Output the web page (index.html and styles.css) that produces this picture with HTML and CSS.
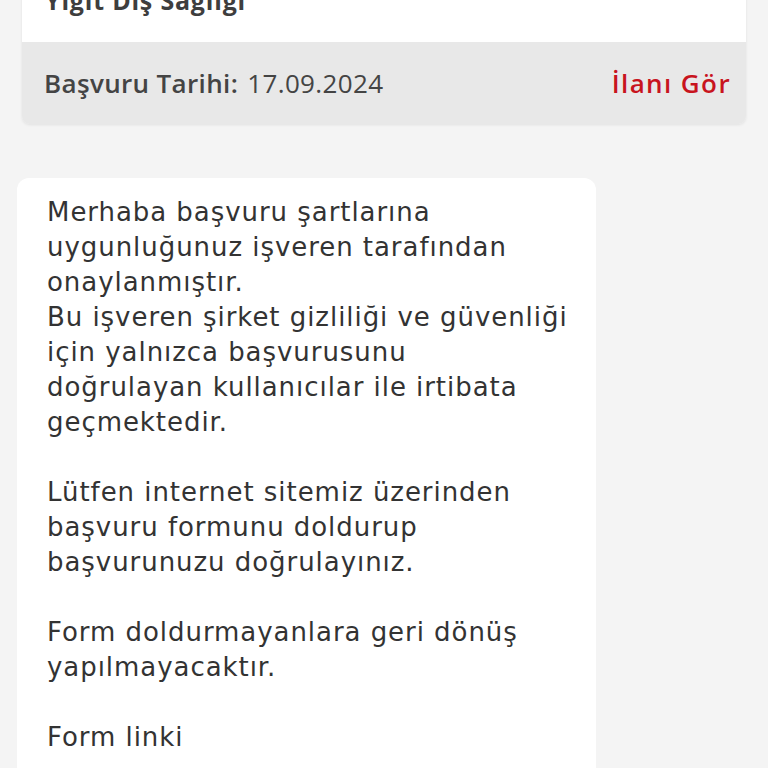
FILE: index.html
```html
<!DOCTYPE html>
<html lang="tr">
<head>
    <meta charset="utf-8">
    <title>Başvurular</title>
    <link rel="stylesheet" href="styles.css">
</head>
<body>
<div class="page">
    <div class="jobCard">
        <div class="jobCard__body">
            <h3 class="jobCard__title">Yiğit Diş Sağlığı</h3>
        </div>
        <div class="jobCard__footer">
            <div class="jobCard__date">
                <span class="jobCard__label">Başvuru Tarihi:</span>
                <span>17.09.2024</span>
            </div>
            <a class="jobCard__link">İlanı Gör</a>
        </div>
    </div>

    <div class="message">
        <p>Merhaba başvuru şartlarına uygunluğunuz işveren tarafından onaylanmıştır.<br>
        Bu işveren şirket gizliliği ve güvenliği için yalnızca başvurusunu doğrulayan kullanıcılar ile irtibata geçmektedir.</p>
        <p>Lütfen internet sitemiz üzerinden başvuru formunu doldurup başvurunuzu doğrulayınız.</p>
        <p>Form doldurmayanlara geri dönüş yapılmayacaktır.</p>
        <p>Form linki</p>
    </div>
</div>
</body>
</html>
```

FILE: styles.css
```css
body {
    margin: 0;
    padding: 0;
    background: #f4f4f4;
    font-family: 'DejaVu Sans', sans-serif;
    overflow: hidden;
}

.page {
    display: flex;
    flex-direction: column;
    align-items: flex-start;
    padding: 0 17px;
}

.jobCard {
    align-self: stretch;
    margin: -60px 5px 0 5px;
    border-radius: 0 0 8px 8px;
    overflow: hidden;
    box-shadow: 0 1px 3px rgba(0, 0, 0, 0.08);
}

.jobCard__body {
    background: #fff;
    height: 102px;
    padding: 0 23px;
    display: flex;
    align-items: flex-end;
}

.jobCard__title {
    margin: 0 0 27px 0;
    font-family: 'Open Sans', sans-serif;
    font-size: 25px;
    line-height: 30px;
    font-weight: 700;
    color: #3e3e3e;
    letter-spacing: 0.8px;
}

.jobCard__footer {
    background: #e8e8e8;
    height: 82px;
    padding: 0 16px 0 22px;
    display: flex;
    align-items: center;
    justify-content: space-between;
    font-family: 'Open Sans', sans-serif;
    font-size: 26px;
    color: #444;
    letter-spacing: 0.35px;
}

.jobCard__label {
    font-weight: 600;
    margin-right: 2px;
}

.jobCard__link {
    color: #c8141e;
    font-weight: 600;
    letter-spacing: 1.4px;
    margin-right: -1px;
}

.message {
    margin-top: 54px;
    width: 523px;
    background: #fff;
    border-radius: 12px;
    padding: 17px 26px 20px 30px;
    font-size: 26px;
    line-height: 35px;
    letter-spacing: 0.95px;
    color: #333;
}

.message p {
    margin: 0 0 35px 0;
}
```
